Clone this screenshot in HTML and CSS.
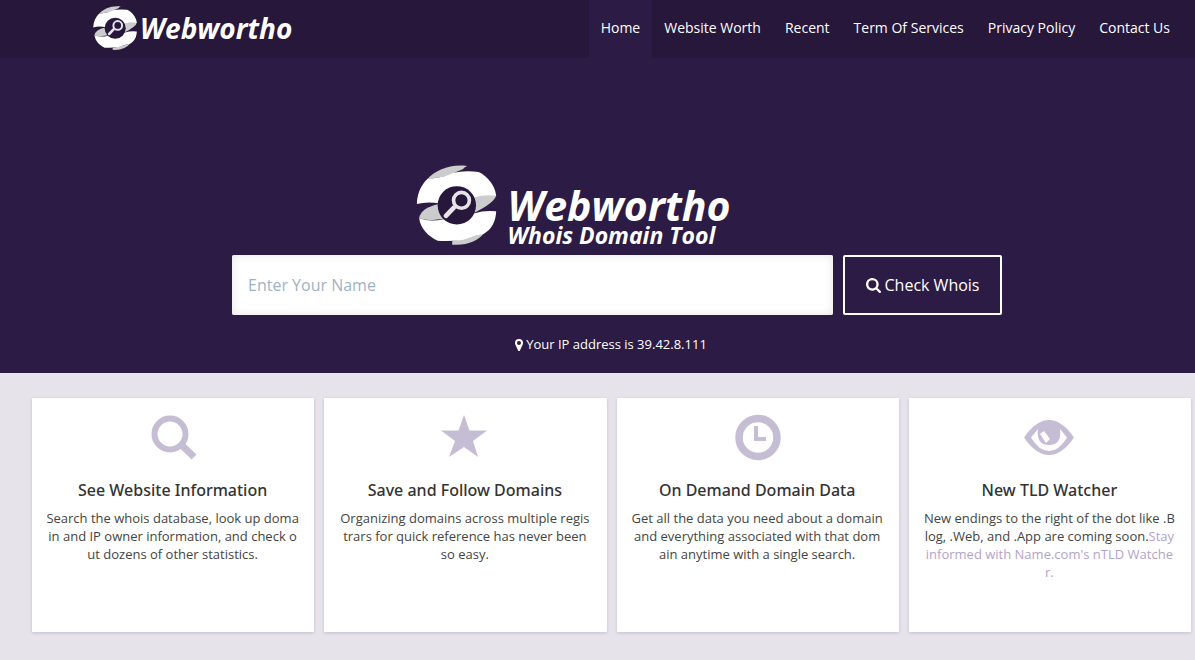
FILE: index.html
```html
<!DOCTYPE html>
<html lang="en">
<head>
<meta charset="utf-8">
<meta name="viewport" content="width=device-width, initial-scale=1">
<title>Webwortho</title>
<link rel="stylesheet" href="styles.css">
</head>
<body>
<svg class="sprite" aria-hidden="true">
  <symbol id="mark" viewBox="8 8 242 242">
    <path fill="#ccc" d="M40 51C68 22 112 4 161 11Q152 15 148 21 130 26 112 40Z"/>
    <path fill="#ccc" d="M180 106Q220 92 249 99 246 122 180 154Z"/>
    <path fill="#ccc" d="M76 126Q20 138 16 169 40 180 100 168Z"/>
    <path fill="#ccc" d="M116 239Q170 228 213 214 180 254 116 249Z"/>
    <path fill="#fff" d="M9 126C10 94 22 68 41 50C66 48 92 44 110 36Q118 31 132 29 165 25 196 29C224 42 247 72 249 101Q214 96 184 106L130 130 76 124Q40 118 9 126Z"/>
    <path fill="#fff" d="M16 169Q50 182 92 171L130 150 184 154Q214 144 249 148C248 178 236 202 212 216Q182 222 150 234 110 240 72 237C44 224 20 200 16 169Z"/>
    <circle cx="130" cy="130" r="58" fill="#26173b"/>
    <path d="M121 137L97 162" stroke="#e8e6ea" stroke-width="14" stroke-linecap="round"/>
    <circle cx="144" cy="115" r="24" fill="none" stroke="#e6e4e9" stroke-width="11"/>
  </symbol>
</svg>

<header class="topbar">
  <a class="brand" href="#"><svg class="brand-mark" aria-hidden="true"><use href="#mark"/></svg><span class="brand-name">Webwortho</span></a>
  <nav class="nav">
    <a class="active" href="#">Home</a>
    <a href="#">Website Worth</a>
    <a href="#">Recent</a>
    <a href="#">Term Of Services</a>
    <a href="#">Privacy Policy</a>
    <a href="#">Contact Us</a>
  </nav>
</header>

<main>
  <section class="hero">
    <div class="hero-logo">
      <svg class="hero-mark" aria-hidden="true"><use href="#mark"/></svg>
      <h1 class="hero-text"><span class="hero-name">Webwortho</span><span class="hero-tag">Whois Domain Tool</span></h1>
    </div>
    <form class="search">
      <input type="text" aria-label="Enter Your Name" placeholder="Enter Your Name">
      <button type="button">
        <svg viewBox="0 0 1664 1664" aria-hidden="true"><path fill="currentColor" d="M1152 704a448 448 0 1 0-896 0 448 448 0 0 0 896 0zm512 832a128 128 0 0 1-218 90l-343-342A704 704 0 1 1 1284 1103l343 343a128 128 0 0 1 37 90z"/></svg>
        Check Whois
      </button>
    </form>
    <p class="ip"><svg viewBox="0 0 1024 1536" aria-hidden="true"><path fill="currentColor" d="M768 512a256 256 0 1 0-512 0 256 256 0 0 0 512 0zm256 0c0 61-7 124-33 179l-364 774a128 128 0 0 1-230 0L33 691C7 636 0 573 0 512a512 512 0 0 1 1024 0z"/></svg>Your IP address is 39.42.8.111</p>
  </section>

  <section class="cards">
    <article class="card">
      <svg class="icon" viewBox="0 0 50 50" aria-hidden="true"><circle cx="22" cy="22" r="15.500" fill="none" stroke="currentColor" stroke-width="6"/><path d="M32.500 32L46 45" stroke="currentColor" stroke-width="7"/></svg>
      <h2>See Website Information</h2>
      <p>Search the whois database, look up domain and IP owner information, and check out dozens of other statistics.</p>
    </article>
    <article class="card">
      <svg class="icon" viewBox="0 0 50 50" aria-hidden="true"><path fill="currentColor" d="M24 3L29.500 18.500H47L33 29 38 45 24 35 9 45 15 29 1 18.500H18.500Z"/></svg>
      <h2>Save and Follow Domains</h2>
      <p>Organizing domains across multiple registrars for quick reference has never been<br>so easy.</p>
    </article>
    <article class="card">
      <svg class="icon" viewBox="0 0 50 50" aria-hidden="true"><circle cx="26" cy="25.500" r="19" fill="none" stroke="currentColor" stroke-width="7.500"/><path fill="currentColor" d="M22 14h4v11h8v4H22z"/></svg>
      <h2>On Demand Domain Data</h2>
      <p>Get all the data you need about a domain and everything associated with that domain anytime with a single search.</p>
    </article>
    <article class="card">
      <svg class="icon" viewBox="0 0 50 50" aria-hidden="true"><path fill="currentColor" fill-rule="evenodd" d="M0 25.500Q12 8 25 8T50 25.500Q38 43 25 43T0 25.500ZM7 25.500Q15 39 25 39T43 25.500L36 17Q38 33 25 33T14 17Z"/><path fill="#fff" d="M16 22L20 19 26 27 22 31Z"/></svg>
      <h2>New TLD Watcher</h2>
      <p>New endings to the right of the dot like .Blog, .Web, and .App are coming soon.<a href="#">Stay informed with Name.com's nTLD Watcher.</a></p>
    </article>
  </section>
</main>
</body>
</html>
```

FILE: styles.css
```css
* { box-sizing: border-box; }

body {
  margin: 0;
  background: #e6e3ea;
  color: #444;
  font-family: "Open Sans", sans-serif;
  font-size: 13px;
}

a { text-decoration: none; }

.sprite { display: none; }

.topbar {
  display: flex;
  justify-content: space-between;
  background: #26173b;
  height: 58px;
  padding: 0 13px 2px 93px;
}

.brand {
  display: flex;
  align-items: center;
  gap: 3px;
  color: #fff;
}

.brand-mark {
  width: 44px;
  height: 44px;
}

.brand-name {
  font-size: 28px;
  font-weight: 700;
  font-style: italic;
}

.nav { display: flex; }

.nav a {
  height: 58px;
  padding: 0 12px;
  color: #fff;
  font-size: 14px;
  line-height: 56px;
  white-space: nowrap;
}

.nav .active { background: #2c1b44; }

.hero {
  display: flex;
  flex-direction: column;
  align-items: center;
  background: #2c1b44;
  padding: 107px 0 19px;
  color: #fff;
}

.hero-logo {
  display: flex;
  gap: 10px;
  margin-right: 48px;
}

.hero-mark {
  width: 81px;
  height: 80px;
}

.hero-text {
  display: flex;
  flex-direction: column;
  margin: 0;
  padding-top: 20px;
  font-style: italic;
}

.hero-name {
  font-size: 41px;
  font-weight: 700;
  line-height: 40px;
}

.hero-tag {
  font-size: 23px;
  font-weight: 700;
  line-height: 20px;
}

.search {
  display: flex;
  gap: 10px;
  width: 770px;
  max-width: 100%;
  margin: 10px 0 0 39px;
}

.search input {
  flex: 1;
  min-width: 0;
  height: 60px;
  padding: 0 16px;
  border: 0;
  border-radius: 2px;
  background: #fff;
  box-shadow: inset 0 0 10px #e6e6e6;
  font: 16px "Open Sans", sans-serif;
}

.search input::placeholder {
  color: #9fb3c4;
  opacity: 1;
}

.search button {
  display: flex;
  align-items: center;
  justify-content: center;
  gap: 4px;
  width: 159px;
  padding: 0;
  border: 2px solid #fff;
  border-radius: 2px;
  background: transparent;
  color: #fff;
  font: 16px "Open Sans", sans-serif;
}

.search button svg {
  width: 15px;
  height: 15px;
}

.ip {
  display: flex;
  align-items: center;
  gap: 3px;
  margin: 20px 0 0 27px;
  line-height: 19px;
}

.ip svg {
  width: 8px;
  height: 12px;
}

.cards {
  display: grid;
  grid-template-columns: repeat(4, 1fr);
  gap: 10px;
  padding: 25px 4px 28px 32px;
}

.card {
  min-height: 234px;
  padding: 14px 15px 14px 14px;
  background: #fff;
  box-shadow: 0 1px 3px #c5bdd3;
  text-align: center;
}

.icon {
  display: block;
  width: 50px;
  height: 50px;
  margin: 0 auto;
  color: #c5bdd3;
}

.card h2 {
  margin: 16px 0 7px;
  color: #333;
  font-family: "Noto Sans", "Open Sans", sans-serif;
  font-size: 16px;
  font-weight: 500;
  line-height: 24px;
}

.card p {
  margin: 0;
  line-height: 18px;
  word-break: break-all;
}

.card p a { color: #b3a2cc; }
```
